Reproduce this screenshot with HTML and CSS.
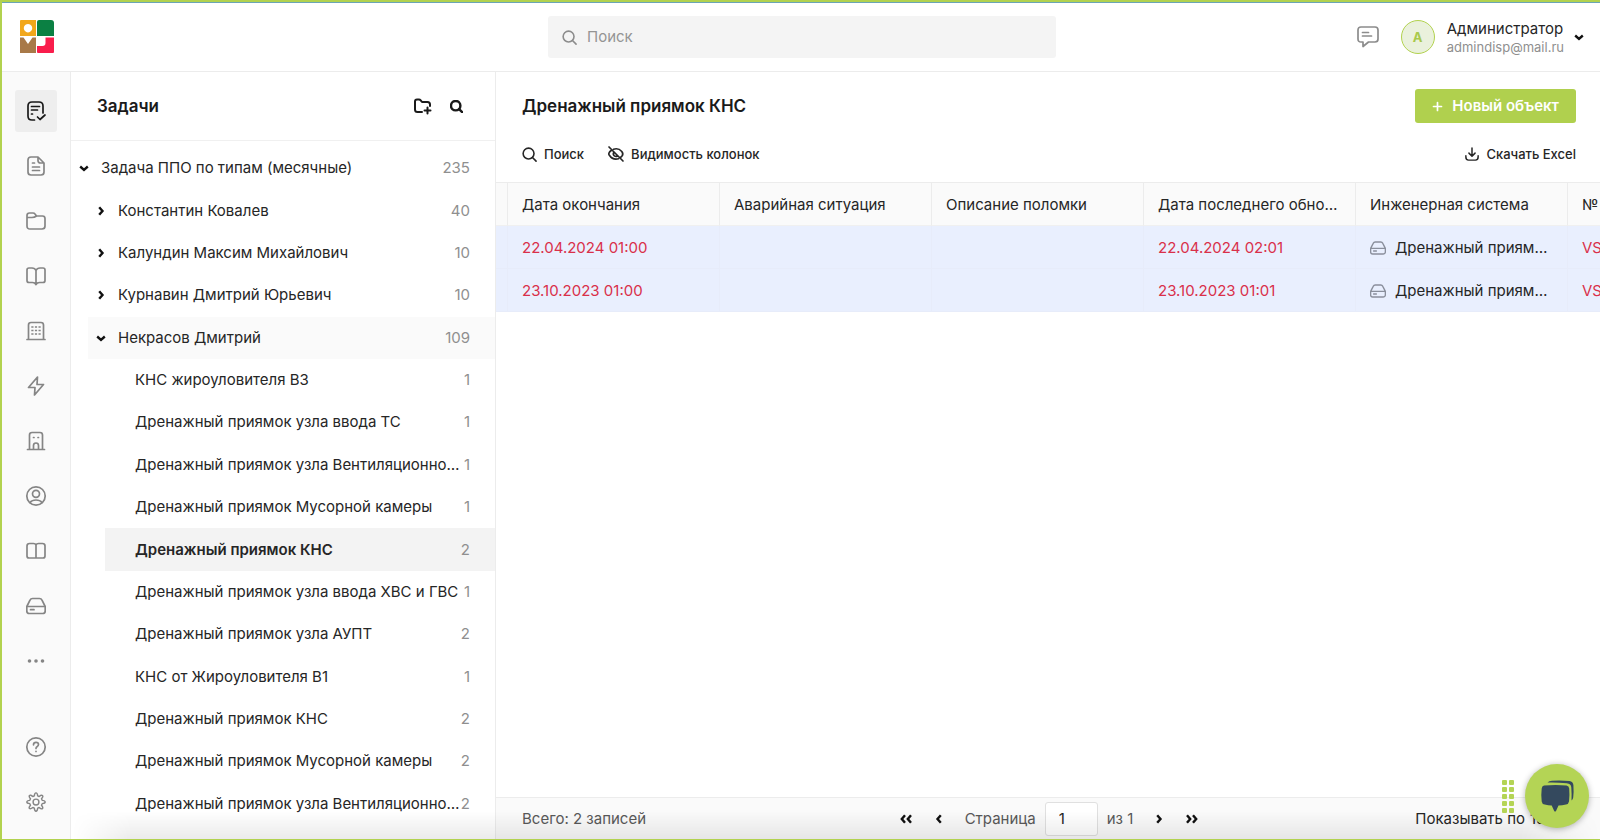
FILE: index.html
```html
<!DOCTYPE html>
<html lang="ru">
<head>
    <meta charset="UTF-8">
    <meta name="viewport" content="width=device-width, initial-scale=1.0">
    <title>Задачи</title>
    <link rel="stylesheet" href="styles.css">
</head>
<body>
    <!-- shared icon shapes -->
    <svg class="sprite" aria-hidden="true">
        <symbol id="down" viewBox="0 0 10 10"><path d="M1.200 3.500L5 6.800l3.800-3.300"/></symbol>
        <symbol id="right" viewBox="0 0 10 10"><path d="M3.200 1.200L6.500 5l-3.300 3.800"/></symbol>
        <symbol id="lens" viewBox="0 0 16 16"><circle cx="7" cy="7" r="5.800"/><path d="M11.200 11.200L15 15"/></symbol>
        <symbol id="drive" viewBox="0 0 20 20"><path d="M.8 10.500L4 4.200Q4.800 2.500 6.500 2.500h7q1.700 0 2.500 1.700l3.200 6.300v4.500q0 2.500-2.500 2.500H3.300Q.8 17.500.8 15zM.8 10.500h18.400M4.500 13.700h3.500"/></symbol>
    </svg>

    <header class="header">
        <a href="#" class="logo" aria-label="На главную">
            <svg width="34" height="34" viewBox="0 0 34 34">
                <path fill="#f2a71b" fill-rule="evenodd" d="M1 0h15v16H0V1q0-1 1-1zM8 4a4.200 4.200 0 1 0 .01 0z"/>
                <path fill="#0b8043" d="M19 0h12q3 0 3 3v13H17V2q0-2 2-2z"/>
                <path fill="#a87948" d="M0 17.500h3.500L8 24l4.500-6.500H16V33H0z"/>
                <path fill="#f91d4c" d="M25.500 17.500H34V32q0 1-1 1H18q-1 0-1-1v-6h5.500q3 0 3-3z"/>
            </svg>
        </a>
        <label class="searchBox">
            <svg class="icon" width="15" height="15"><use href="#lens"/></svg>
            <input type="search" placeholder="Поиск" aria-label="Поиск">
        </label>
        <div class="userArea">
            <button class="iconBtn commentBtn" aria-label="Сообщения">
                <svg class="icon" width="22" height="22" viewBox="0 0 22 22"><path d="M4 1h14q3 0 3 3v9q0 3-3 3h-6.500L6 20.500V16H4q-3 0-3-3V4q0-3 3-3zM5.500 6.500h6M5.500 10h9"/></svg>
            </button>
            <button class="userBtn">
                <span class="avatar">A</span>
                <span class="userText">
                    <span class="userName">Администратор</span>
                    <span class="userMail">admindisp@mail.ru</span>
                </span>
                <svg class="chevron" width="10" height="10"><use href="#down"/></svg>
            </button>
        </div>
    </header>

    <div class="layout">
        <nav class="sidebar">
            <a href="#" class="navItem active" aria-label="Задачи"><svg class="icon" width="20" height="20" viewBox="0 0 20 20"><path d="M8.500 19H6q-4 0-4-4V5q0-4 4-4h7q4 0 4 4v7M5.500 5.500h8M5.500 9h6M5.500 13h1M11.500 16l2.500 2.500 5-4.500"/></svg></a>
            <a href="#" class="navItem" aria-label="Документы"><svg class="icon" width="20" height="20" viewBox="0 0 20 20"><path d="M12 1H5Q2 1 2 4v12q0 3 3 3h10q3 0 3-3V7zM12 1v3.500Q12 7 14.500 7H18M6.500 7h2M6.500 11h7M6.500 14.500h7"/></svg></a>
            <a href="#" class="navItem" aria-label="Папки"><svg class="icon" width="20" height="20" viewBox="0 0 20 20"><path d="M1 15V4.500Q1 2 3.500 2H7q1.300 0 2 1l1.500 2H16.500Q19 5 19 7.500V15q0 3-3 3H4q-3 0-3-3zM1 6.500h5Q8.500 6.500 10.500 5"/></svg></a>
            <a href="#" class="navItem" aria-label="Справочник"><svg class="icon" width="20" height="20" viewBox="0 0 20 20"><path d="M10 4.500Q9 2 6 2H3Q1 2 1 4v10.500q0 2 2 2h3.500Q9 16.500 10 18.500q1-2 3.500-2H17q2 0 2-2V4q0-2-2-2h-3q-3 0-4 2.500zM10 4.500v14"/></svg></a>
            <a href="#" class="navItem" aria-label="Здания"><svg class="icon" width="20" height="20" viewBox="0 0 20 20"><path d="M2.500 18V4q0-2.500 2.500-2.500h10Q17.500 1.500 17.500 4v14M1 18.500h18"/><path stroke-linecap="butt" d="M5.300 6h2.200M8.900 6h2.200M12.500 6h2.200M5.300 9.500h2.200M8.900 9.500h2.200M12.500 9.500h2.200M5.300 13h2.200M8.900 13h2.200M12.500 13h2.200"/></svg></a>
            <a href="#" class="navItem" aria-label="Энергия"><svg class="icon" width="20" height="20" viewBox="0 0 20 20"><path d="M11.500 1L2.500 11.500H9L8.500 19l9-10.500H11z"/></svg></a>
            <a href="#" class="navItem" aria-label="Объекты"><svg class="icon" width="20" height="20" viewBox="0 0 20 20"><path d="M3.500 18V4Q3.500 1.500 6 1.500h8q2.500 0 2.500 2.500v14M1.500 18.500h17M7.500 18.500v-4q0-2.500 2.500-2.500t2.500 2.500v4M7.500 6.500h.5M12 6.500h.5"/></svg></a>
            <a href="#" class="navItem" aria-label="Профиль"><svg class="icon" width="20" height="20" viewBox="0 0 20 20"><circle cx="10" cy="10" r="9.200"/><circle cx="10" cy="7.800" r="3.500"/><path d="M4 16.500q2-2.500 6-2.500t6 2.500"/></svg></a>
            <a href="#" class="navItem" aria-label="Журнал"><svg class="icon" width="20" height="20" viewBox="0 0 20 20"><path d="M10 4Q9.500 2.500 7.500 2.500h-4Q1 2.500 1 5v10q0 2 2 2h14q2 0 2-2V5q0-2.500-2.500-2.500h-4Q10.500 2.500 10 4zM10 4v13"/></svg></a>
            <a href="#" class="navItem" aria-label="Оборудование"><svg class="icon" width="20" height="20"><use href="#drive"/></svg></a>
            <a href="#" class="navItem" aria-label="Ещё"><svg width="20" height="20" viewBox="0 0 20 20" fill="currentColor"><circle cx="3.500" cy="10" r="1.800"/><circle cx="10" cy="10" r="1.800"/><circle cx="16.500" cy="10" r="1.800"/></svg></a>
            <a href="#" class="navItem navHelp" aria-label="Помощь"><svg class="icon" width="20" height="20" viewBox="0 0 20 20"><circle cx="10" cy="10" r="9.200"/><path d="M7.500 7.800q0-2.500 2.500-2.500t2.500 2.200q0 1.300-1.500 2.200-1 .6-1 1.800M10 14.300v.2"/></svg></a>
            <a href="#" class="navItem" aria-label="Настройки"><svg class="icon" width="20" height="20" viewBox="0 0 24 24"><circle cx="12" cy="12" r="3.500"/><path d="M10 4.600Q10.300 1 12 1t2 3.600l1.800.8q2.700-2.300 4-1.200t-1.200 4l.8 1.800q3.600.3 3.600 2t-3.600 2l-.8 1.800q2.300 2.700 1.200 4t-4-1.200l-1.800.8q-.3 3.600-2 3.600t-2-3.600l-1.800-.8q-2.700 2.300-4 1.200t1.200-4L4.600 14Q1 13.700 1 12t3.600-2l.8-1.800q-2.300-2.700-1.200-4t4 1.200z"/></svg></a>
        </nav>

        <section class="treePanel">
            <div class="treeHeader">
                <h2>Задачи</h2>
                <button class="iconBtn" aria-label="Новая папка"><svg class="icon bold" width="17" height="16" viewBox="0 0 17 16"><path d="M8 14H3.500Q1 14 1 11.500v-8Q1 1.500 3 1.500h2q1 0 1.700.8L8 4h5.500Q16 4 16 6.500V8M13.500 9.500v6M10.500 12.500h6"/></svg></button>
                <button class="iconBtn" aria-label="Поиск по дереву"><svg class="icon boldest" width="13" height="13"><use href="#lens"/></svg></button>
            </div>
            <ul class="tree">
                <li class="node"><button><svg class="chevron" width="10" height="10"><use href="#down"/></svg><span class="nodeName">Задача ППО по типам (месячные)</span><span class="count">235</span></button></li>
                <li class="node level1"><button><svg class="chevron" width="10" height="10"><use href="#right"/></svg><span class="nodeName">Константин Ковалев</span><span class="count">40</span></button></li>
                <li class="node level1"><button><svg class="chevron" width="10" height="10"><use href="#right"/></svg><span class="nodeName">Калундин Максим Михайлович</span><span class="count">10</span></button></li>
                <li class="node level1"><button><svg class="chevron" width="10" height="10"><use href="#right"/></svg><span class="nodeName">Курнавин Дмитрий Юрьевич</span><span class="count">10</span></button></li>
                <li class="node level1 opened"><button><svg class="chevron" width="10" height="10"><use href="#down"/></svg><span class="nodeName">Некрасов Дмитрий</span><span class="count">109</span></button></li>
                <li class="node level2"><button><span class="nodeName">КНС жироуловителя В3</span><span class="count">1</span></button></li>
                <li class="node level2"><button><span class="nodeName">Дренажный приямок узла ввода ТС</span><span class="count">1</span></button></li>
                <li class="node level2"><button><span class="nodeName">Дренажный приямок узла Вентиляционной камеры</span><span class="count">1</span></button></li>
                <li class="node level2"><button><span class="nodeName">Дренажный приямок Мусорной камеры</span><span class="count">1</span></button></li>
                <li class="node level2 selected"><button><span class="nodeName">Дренажный приямок КНС</span><span class="count">2</span></button></li>
                <li class="node level2"><button><span class="nodeName">Дренажный приямок узла ввода ХВС и ГВС</span><span class="count">1</span></button></li>
                <li class="node level2"><button><span class="nodeName">Дренажный приямок узла АУПТ</span><span class="count">2</span></button></li>
                <li class="node level2"><button><span class="nodeName">КНС от Жироуловителя В1</span><span class="count">1</span></button></li>
                <li class="node level2"><button><span class="nodeName">Дренажный приямок КНС</span><span class="count">2</span></button></li>
                <li class="node level2"><button><span class="nodeName">Дренажный приямок Мусорной камеры</span><span class="count">2</span></button></li>
                <li class="node level2"><button><span class="nodeName">Дренажный приямок узла Вентиляционной камеры</span><span class="count">2</span></button></li>
            </ul>
        </section>

        <main class="content">
            <div class="titleRow">
                <h1>Дренажный приямок КНС</h1>
                <button class="addBtn"><svg class="icon" width="9" height="9" viewBox="0 0 9 9"><path d="M4.500 .5v8M.5 4.500h8"/></svg>Новый объект</button>
            </div>
            <div class="toolbar">
                <button class="toolBtn"><svg class="icon" width="15" height="15"><use href="#lens"/></svg>Поиск</button>
                <button class="toolBtn"><svg class="icon" width="16" height="16" viewBox="0 0 16 16"><path d="M5.500 3.200Q10.500 1.600 13.800 5.500q2 2.500 0 4.800l-1 .9M3.500 4.200Q1.500 5.500.9 7.200q-.3.800.3 1.800 3.600 5.500 9.300 3.800M1 1l14 14M5.700 6.500q-1 2 .7 3.400 1.300.9 2.900.3"/></svg>Видимость колонок</button>
                <button class="toolBtn excelBtn"><svg class="icon" width="14" height="14" viewBox="0 0 16 16"><path d="M8 1v9M4.500 7L8 10.500 11.500 7M1 10v1.500Q1 15 4 15h8q3 0 3-3.500V10"/></svg>Скачать Excel</button>
            </div>
            <div class="tableWrap">
                <table>
                    <thead>
                        <tr>
                            <th class="stub"></th>
                            <th>Дата окончания</th>
                            <th>Аварийная ситуация</th>
                            <th>Описание поломки</th>
                            <th>Дата последнего обновления</th>
                            <th>Инженерная система</th>
                            <th>№</th>
                        </tr>
                    </thead>
                    <tbody>
                        <tr>
                            <td class="stub"></td>
                            <td class="late">22.04.2024 01:00</td>
                            <td></td>
                            <td></td>
                            <td class="late">22.04.2024 02:01</td>
                            <td><div class="system"><svg class="icon" width="16" height="16"><use href="#drive"/></svg><span>Дренажный приямок КНС</span></div></td>
                            <td class="late">VS</td>
                        </tr>
                        <tr>
                            <td class="stub"></td>
                            <td class="late">23.10.2023 01:00</td>
                            <td></td>
                            <td></td>
                            <td class="late">23.10.2023 01:01</td>
                            <td><div class="system"><svg class="icon" width="16" height="16"><use href="#drive"/></svg><span>Дренажный приямок КНС</span></div></td>
                            <td class="late">VS</td>
                        </tr>
                    </tbody>
                </table>
            </div>
            <footer class="footer">
                <span class="total">Всего: 2 записей</span>
                <div class="pager">
                    <button class="iconBtn" aria-label="Первая страница"><svg class="chevron" width="12" height="10" viewBox="0 0 12 10"><path d="M5 1.200L1.800 5 5 8.800M11 1.200L7.800 5 11 8.800"/></svg></button>
                    <button class="iconBtn" aria-label="Предыдущая страница"><svg class="chevron" width="10" height="10" viewBox="0 0 10 10"><path d="M6.800 1.200L3.500 5l3.300 3.800"/></svg></button>
                    <label for="page">Страница</label>
                    <input type="text" id="page" value="1">
                    <span class="pageTotal">из 1</span>
                    <button class="iconBtn" aria-label="Следующая страница"><svg class="chevron" width="10" height="10"><use href="#right"/></svg></button>
                    <button class="iconBtn" aria-label="Последняя страница"><svg class="chevron" width="12" height="10" viewBox="0 0 12 10"><path d="M1 1.200L4.200 5 1 8.800M7 1.200L10.200 5 7 8.800"/></svg></button>
                </div>
                <div class="perPage">
                    <label for="perPage">Показывать по</label>
                    <select id="perPage"><option>15</option><option>30</option><option>50</option></select>
                </div>
            </footer>
        </main>
    </div>

    <div class="bottomShade"></div>
    <div class="chat">
        <div class="dragDots"><i></i><i></i><i></i><i></i><i></i><i></i><i></i><i></i><i></i><i></i></div>
        <button class="chatBtn" aria-label="Открыть чат">
            <svg width="34" height="32" viewBox="0 0 34 32">
                <path fill="#34495e" d="M4 5.500q12-1.200 22.500 0 2.500.5 2.700 3 .6 6.500-.2 13-.4 2.500-3 3-4 .8-7.500 1L16 31q-.9 1-1.800 0L11.700 25.500q-3.500-.2-7-1-2.700-.5-3-3-.8-6.500 0-13 .2-2.600 2.300-3z"/>
                <path fill="#34495e" d="M7.500 2.500Q9 .8 12 .8q9-.6 17.500.3 3.500.4 3.900 4 .5 7-.2 12.500-.3 2-1.700 3 .3-6.500-.2-13-.2-4-4.500-4.400Q17 2.200 7.500 2.500z"/>
            </svg>
        </button>
    </div>
</body>
</html>
```

FILE: styles.css
```css
*{margin: 0;padding: 0;box-sizing: border-box;}
body{display: flex;flex-direction: column;height: 100vh;border: 2px solid #b2d24f;border-width: 2px 0 1px 2px;overflow: hidden;font-family: Inter, "Noto Sans", sans-serif;font-size: 15px;line-height: 20px;color: #262626;background: #fff;}
button, input, select{font: inherit;color: inherit;background: none;border: none;}
button{cursor: pointer;}
a{color: inherit;text-decoration: none;}
svg{flex: none;display: block;}
.sprite{display: none;}
.icon{fill: none;stroke: currentColor;stroke-width: 1.7;stroke-linecap: round;stroke-linejoin: round;overflow: visible;}
.bold{stroke-width: 2;}
.boldest{stroke-width: 3;}
.chevron{fill: none;stroke: #111;stroke-width: 2.4;overflow: visible;}
.iconBtn{display: flex;align-items: center;justify-content: center;}

/* header */
.header{display: grid;grid-template-columns: 1fr 508px 1fr;align-items: center;height: 70px;flex: none;padding: 0 16px 0 18px;border-top: 1px solid #6aa5b5;border-bottom: 1px solid #ececec;}
.logo{width: 34px;}
.searchBox{display: flex;align-items: center;gap: 10px;height: 42px;padding: 0 14px;border-radius: 3px;background: #f4f4f4;color: #8c8c8c;}
.searchBox input{flex: 1;outline: none;}
.searchBox input::placeholder{color: #949494;}
.userArea{display: flex;align-items: center;justify-content: flex-end;gap: 22px;}
.commentBtn{color: #8c8c8c;}
.userBtn{display: flex;align-items: center;gap: 12px;text-align: left;}
.avatar{display: flex;align-items: center;justify-content: center;width: 34px;height: 34px;border: 1px solid #b2d24f;border-radius: 50%;background: #eaf1dc;color: #a9c94a;font-size: 13px;font-weight: 700;}
.userText{display: flex;flex-direction: column;padding-top: 2px;line-height: 18px;}
.userMail{font-size: 13px;color: #8f8f8f;}
.userBtn .chevron{margin-left: -2px;}

/* left icon bar */
.layout{display: flex;flex: 1;min-height: 0;}
.sidebar{display: flex;flex-direction: column;align-items: center;gap: 13px;width: 69px;flex: none;padding: 18px 0 16px;background: #fafafa;border-right: 1px solid #ececec;color: #858585;}
.navItem{display: flex;align-items: center;justify-content: center;width: 42px;height: 42px;flex: none;border-radius: 3px;}
.navItem.active{background: #eee;color: #1a1a1a;}
.navHelp{margin-top: auto;}

/* tree of tasks */
.treePanel{display: flex;flex-direction: column;width: 425px;flex: none;border-right: 1px solid #ececec;}
.treeHeader{display: flex;align-items: center;gap: 19px;height: 69px;flex: none;padding: 0 32px 0 26px;border-bottom: 1px solid #f0f0f0;color: #1a1a1a;}
.treeHeader h2{flex: 1;font-size: 17px;font-weight: 600;}
.tree{display: flex;flex-direction: column;flex: 1;min-height: 0;padding: 6px 0 14px;list-style: none;}
.node{display: flex;flex: 1;}
.node button{display: flex;align-items: center;flex: 1;min-width: 0;padding: 0 25px 0 8px;text-align: left;}
.node .chevron{margin-right: 12px;}
.nodeName{flex: 1;overflow: hidden;text-overflow: ellipsis;white-space: nowrap;}
.count{color: #8f8f8f;}
.level1{margin-left: 17px;}
.level2{margin-left: 34px;}
.level2 button{padding-left: 30px;}
.opened{background: #fafafa;}
.selected{background: #f3f3f3;}
.selected .nodeName{font-weight: 600;}

/* table side */
.content{display: flex;flex-direction: column;flex: 1;min-width: 0;}
.titleRow{display: flex;align-items: center;justify-content: space-between;padding: 17px 24px 0 26px;}
h1{font-size: 17px;font-weight: 600;color: #1a1a1a;}
.addBtn{display: flex;align-items: center;gap: 10px;height: 34px;padding: 0 17px 0 18px;border-radius: 3px;background: #b0d04e;color: #fff;font-weight: 600;}
.toolbar{display: flex;align-items: center;gap: 24px;padding: 21px 24px 18px 26px;}
.toolBtn{display: flex;align-items: center;gap: 7px;font-size: 13px;font-weight: 500;}
.excelBtn{margin-left: auto;}
.tableWrap{flex: 1;min-height: 0;overflow: hidden;}
table{width: 1284px;table-layout: fixed;border-collapse: separate;border-spacing: 0;}
th, td{width: 212px;padding: 1px 14px 0;text-align: left;font-weight: 400;overflow: hidden;text-overflow: ellipsis;white-space: nowrap;}
.stub{width: 12px;padding: 0;}
th{height: 44px;background: #fafafa;border-top: 1px solid #ececec;border-bottom: 1px solid #f0f0f0;border-right: 1px solid #ececec;}
td{height: 43px;background: #e9effe;border-right: 1px solid #e7ecfa;border-bottom: 1px solid #e7ecfa;}
.late{color: #d9304a;}
.system{display: flex;align-items: center;gap: 9px;}
.system svg{color: #8a8f9c;}
.system span{overflow: hidden;text-overflow: ellipsis;}
.footer{display: grid;grid-template-columns: 1fr auto 1fr;align-items: center;height: 42px;flex: none;padding: 0 24px 0 26px;border-top: 1px solid #ececec;background: #fafafa;}
.total, .pager{color: #595959;}
.pager{display: flex;align-items: center;gap: 9px;}
.pager .iconBtn{width: 24px;height: 24px;}
.pager label{margin-left: 5px;}
.pageTotal{margin-right: 5px;}
.pager input{width: 53px;height: 34px;padding: 0 13px;border: 1px solid #e0e0e0;border-radius: 3px;background: #fff;color: #262626;}
.perPage{display: flex;justify-content: flex-end;gap: 5px;}
.perPage select{width: 46px;appearance: none;}

/* overlays */
.bottomShade{position: absolute;left: 72px;right: 0;bottom: 1px;height: 28px;background: linear-gradient(to top, rgba(0,0,0,.08), rgba(0,0,0,0));mask-image: linear-gradient(to right, transparent, #000 60px, #000 calc(100% - 80px), transparent);pointer-events: none;}
.chat{position: absolute;right: 11px;bottom: 12px;display: flex;align-items: center;gap: 11px;}
.dragDots{display: grid;grid-template-columns: 5px 5px;gap: 2px;}
.dragDots i{height: 5px;border-radius: 1px;background: #b4d455;}
.chatBtn{display: flex;align-items: center;justify-content: center;width: 64px;height: 64px;border-radius: 50%;background: #b4d455;box-shadow: 0 1px 6px rgba(0,0,0,.3);}
```
